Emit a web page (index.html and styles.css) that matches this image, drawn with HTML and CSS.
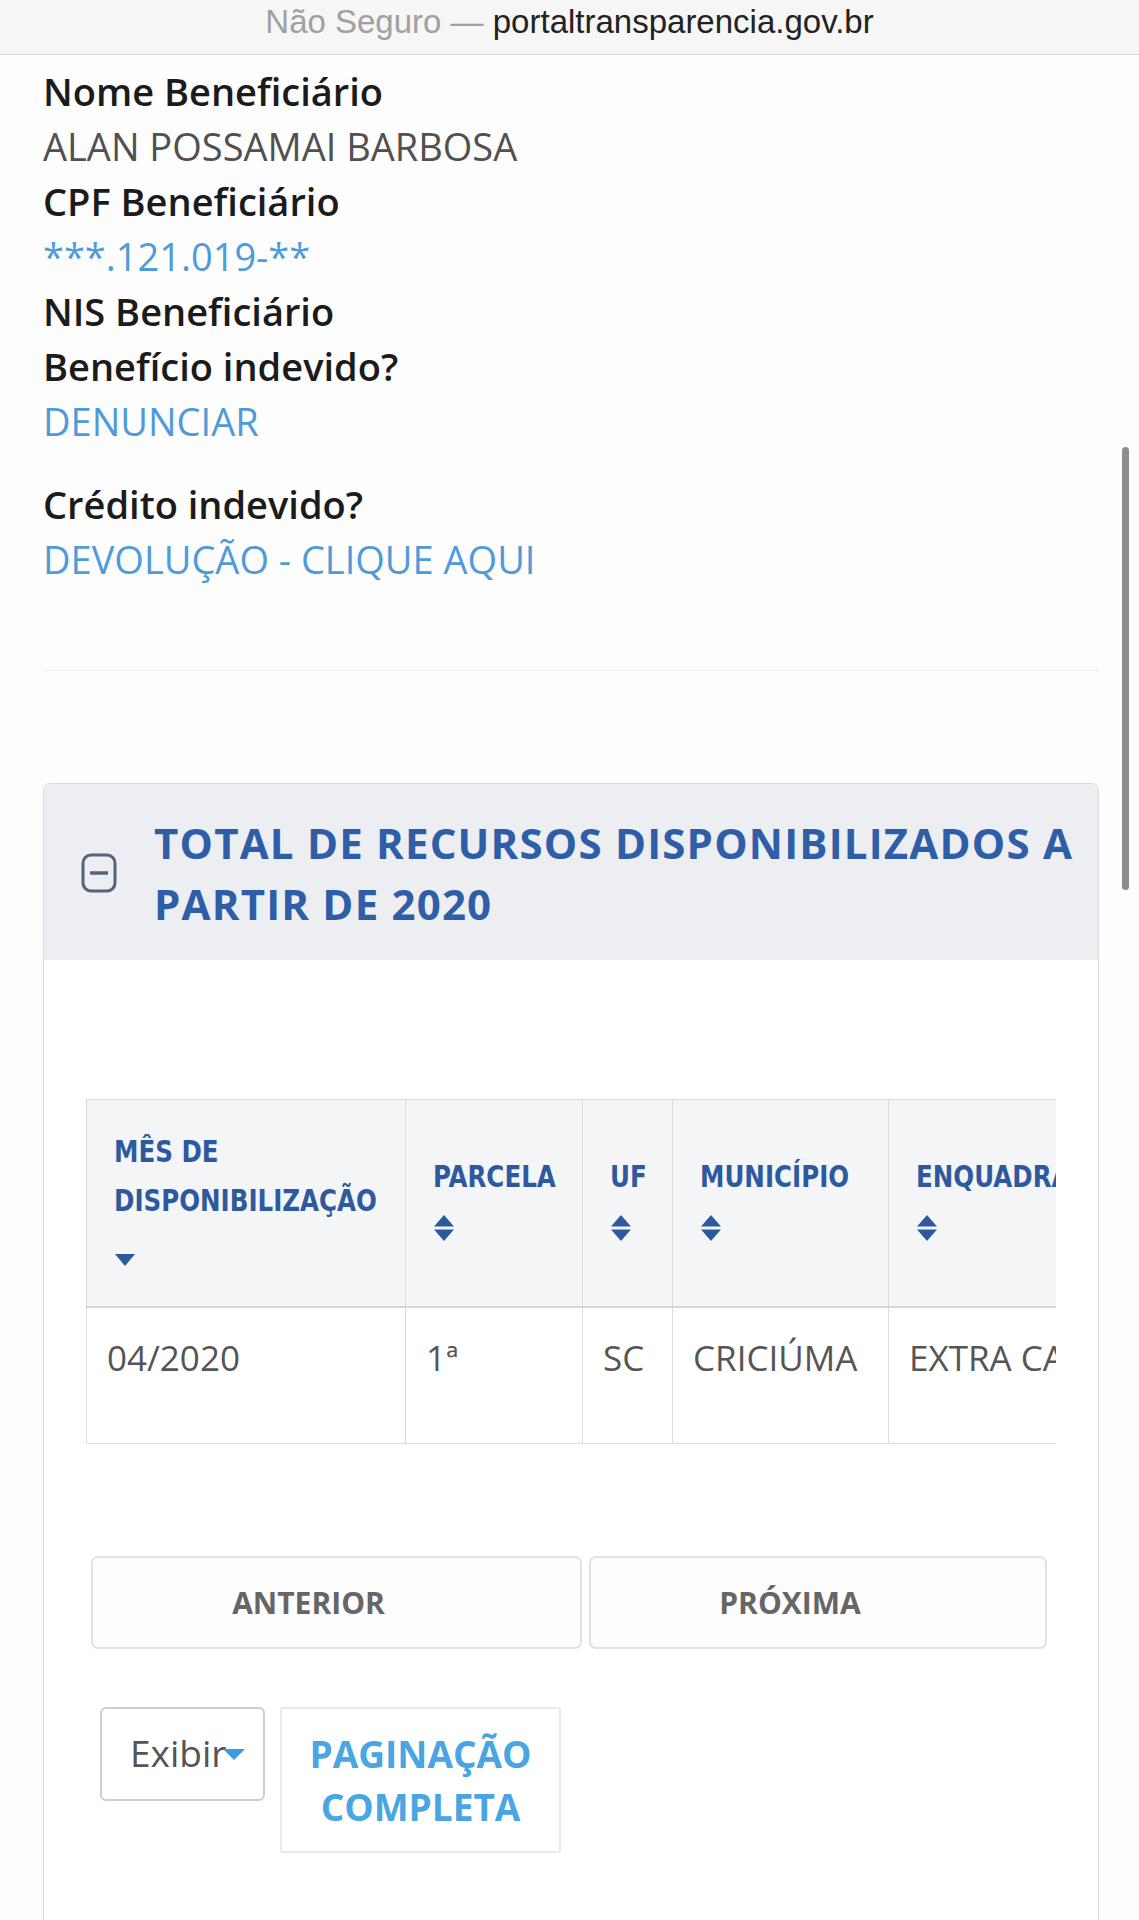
FILE: index.html
```html
<!DOCTYPE html>
<html lang="pt-BR">
<head>
<meta charset="utf-8">
<title>Portal da Transparência</title>
<link rel="stylesheet" href="styles.css">
</head>
<body>
<header class="urlbar">
  <span class="insecure">Não Seguro —&nbsp;</span><span class="host">portaltransparencia.gov.br</span>
</header>

<main class="content">
  <dl class="info">
    <dt>Nome Beneficiário</dt>
    <dd class="value">ALAN POSSAMAI BARBOSA</dd>
    <dt>CPF Beneficiário</dt>
    <dd class="value link">***.121.019-**</dd>
    <dt>NIS Beneficiário</dt>
    <dt>Benefício indevido?</dt>
    <dd class="value"><a class="link" href="#">DENUNCIAR</a></dd>
    <dt class="spaced">Crédito indevido?</dt>
    <dd class="value"><a class="link" href="#">DEVOLUÇÃO - CLIQUE AQUI</a></dd>
  </dl>

  <hr class="divider">

  <section class="panel">
    <div class="panel-head">
      <svg class="toggle" width="36" height="40" viewBox="0 0 36 40" aria-hidden="true">
        <rect x="2" y="2" width="32" height="36" rx="8" ry="8" fill="none" stroke="#56637a" stroke-width="3"/>
        <line x1="9" y1="20" x2="27" y2="20" stroke="#56637a" stroke-width="3.5"/>
      </svg>
      <h2 class="panel-title">TOTAL DE RECURSOS DISPONIBILIZADOS A PARTIR DE 2020</h2>
    </div>

    <div class="panel-body">
      <div class="table-wrap">
        <table class="grid">
          <colgroup>
            <col class="c-mes"><col class="c-parc"><col class="c-uf"><col class="c-mun"><col class="c-enq"><col class="c-obs">
          </colgroup>
          <thead>
            <tr>
              <th><span class="th-label">MÊS DE DISPONIBILIZAÇÃO</span><span class="sort"><svg width="22" height="28" viewBox="0 0 22 28"><path d="M1 15 L21 15 L11 27 Z" fill="#2d5a9e"/></svg></span></th>
              <th><span class="th-label">PARCELA</span><span class="sort"><svg width="22" height="28" viewBox="0 0 22 28"><path d="M1 12.5 L11 1 L21 12.5 Z M1 15.5 L21 15.5 L11 27 Z" fill="#2d5a9e"/></svg></span></th>
              <th><span class="th-label">UF</span><span class="sort"><svg width="22" height="28" viewBox="0 0 22 28"><path d="M1 12.5 L11 1 L21 12.5 Z M1 15.5 L21 15.5 L11 27 Z" fill="#2d5a9e"/></svg></span></th>
              <th><span class="th-label">MUNICÍPIO</span><span class="sort"><svg width="22" height="28" viewBox="0 0 22 28"><path d="M1 12.5 L11 1 L21 12.5 Z M1 15.5 L21 15.5 L11 27 Z" fill="#2d5a9e"/></svg></span></th>
              <th><span class="th-label">ENQUADRAMENTO</span><span class="sort"><svg width="22" height="28" viewBox="0 0 22 28"><path d="M1 12.5 L11 1 L21 12.5 Z M1 15.5 L21 15.5 L11 27 Z" fill="#2d5a9e"/></svg></span></th>
              <th><span class="th-label">VALOR (R$)</span><span class="sort"><svg width="22" height="28" viewBox="0 0 22 28"><path d="M1 12.5 L11 1 L21 12.5 Z M1 15.5 L21 15.5 L11 27 Z" fill="#2d5a9e"/></svg></span></th>
            </tr>
          </thead>
          <tbody>
            <tr>
              <td>04/2020</td>
              <td>1ª</td>
              <td>SC</td>
              <td>CRICIÚMA</td>
              <td>EXTRA CADÚNICO</td>
              <td>600,00</td>
            </tr>
          </tbody>
        </table>
      </div>

      <div class="pager">
        <button class="pager-btn" type="button">ANTERIOR</button>
        <button class="pager-btn" type="button">PRÓXIMA</button>
      </div>

      <div class="controls">
        <div class="select">
          <span class="select-text">Exibir</span>
          <svg class="select-caret" width="24" height="14" viewBox="0 0 24 14"><path d="M1 2 L23 2 L12 13 Z" fill="#3d9ae0"/></svg>
        </div>
        <button class="full-btn" type="button">PAGINAÇÃO<br>COMPLETA</button>
      </div>
    </div>
  </section>
</main>

<div class="scroll-indicator"></div>
</body>
</html>
```

FILE: styles.css
```css
* {
  box-sizing: border-box;
}

html, body {
  margin: 0;
  padding: 0;
  background: #fdfdfd;
}

body {
  font-family: "Open Sans", "Noto Sans", sans-serif;
  color: #1b1b1b;
  overflow: hidden;
}

/* Safari URL bar */
.urlbar {
  height: 55px;
  display: flex;
  justify-content: center;
  align-items: center;
  padding-bottom: 10px;
  background: #f6f6f6;
  border-bottom: 1px solid #dadada;
  font-family: "Liberation Sans", Arial, sans-serif;
  font-size: 33px;
}

.insecure {
  color: #a0a0a0;
}

.host {
  color: #222;
}

.content {
  padding: 9px 40px 0 43px;
}

/* beneficiary info */
.info {
  margin: 0;
  font-size: 38px;
  line-height: 55px;
}

.info dt {
  font-weight: 600;
  color: #1b1b1b;
}

.info dt.spaced {
  margin-top: 28px;
}

.info dd {
  margin: 0;
}

.value {
  color: #505050;
}

.link {
  color: #4f9bd9;
  text-decoration: none;
}

.divider {
  margin: 83px 0 0;
  border: 0;
  border-top: 1px solid #ececec;
}

/* panel */
.panel {
  margin-top: 112px;
  border: 1px solid #d9dbde;
  border-bottom: 0;
  border-radius: 7px 7px 0 0;
  background: #ffffff;
}

.panel-head {
  display: flex;
  align-items: center;
  gap: 37px;
  padding: 28px 16px 26px 37px;
  background: #eceef1;
  border-radius: 7px 7px 0 0;
}

.toggle {
  flex: none;
}

.panel-title {
  margin: 0;
  font-size: 42px;
  line-height: 61px;
  font-weight: 700;
  letter-spacing: 1.2px;
  color: #2f5ea8;
}

.panel-body {
  padding: 139px 42px 220px 42px;
}

/* table */
.table-wrap {
  overflow: hidden;
}

.grid {
  width: 1382px;
  table-layout: fixed;
  border-collapse: collapse;
}

.c-mes { width: 319px; }
.c-parc { width: 177px; }
.c-uf { width: 90px; }
.c-mun { width: 216px; }
.c-enq { width: 330px; }
.c-obs { width: 250px; }

.grid th,
.grid td {
  border: 1px solid #dcdcdc;
  text-align: left;
}

.grid th {
  background: #f4f5f7;
  border-bottom: 2px solid #d6d6d6;
  padding: 27px 10px 26px 27px;
  vertical-align: middle;
  font-family: "DejaVu Sans Condensed", "DejaVu Sans", sans-serif;
  font-stretch: condensed;
  font-weight: 700;
  font-size: 31px;
  line-height: 49px;
  color: #2d5a9e;
  white-space: normal;
}

.th-label {
  display: block;
  transform: scaleX(0.88);
  transform-origin: left center;
}

.sort {
  display: flex;
  align-items: center;
  height: 55px;
}

.grid td {
  padding: 25px 10px 61px 20px;
  vertical-align: top;
  font-size: 35px;
  line-height: 49px;
  color: #555555;
  white-space: nowrap;
  overflow: hidden;
}

/* pager */
.pager {
  display: grid;
  grid-template-columns: 491px 458px;
  gap: 7px;
  margin: 112px 0 0 5px;
}

.pager-btn {
  height: 93px;
  padding: 0 56px 0 0;
  border: 2px solid #e2e2e2;
  border-radius: 7px;
  background: #fdfdfd;
  font-family: "Open Sans", sans-serif;
  font-weight: 700;
  font-size: 30px;
  color: #666666;
  text-align: center;
}

/* controls */
.controls {
  display: flex;
  align-items: flex-start;
  gap: 15px;
  margin: 58px 0 0 14px;
}

.select {
  position: relative;
  width: 165px;
  height: 94px;
  display: flex;
  align-items: center;
  padding: 0 0 4px 28px;
  border: 2px solid #cdcdcd;
  border-radius: 6px;
  background: #ffffff;
  font-size: 37px;
  color: #555555;
}

.select-caret {
  position: absolute;
  left: 120px;
  top: 38px;
}

.full-btn {
  width: 281px;
  height: 146px;
  padding: 0;
  border: 2px solid #e3eaf0;
  border-radius: 3px;
  background: #ffffff;
  font-family: "Open Sans", sans-serif;
  font-weight: 700;
  font-size: 37px;
  line-height: 53px;
  color: #4aa6e3;
  text-align: center;
}

.scroll-indicator {
  position: fixed;
  right: 10px;
  top: 447px;
  width: 7px;
  height: 443px;
  border-radius: 4px;
  background: #8c8c8c;
}
```
